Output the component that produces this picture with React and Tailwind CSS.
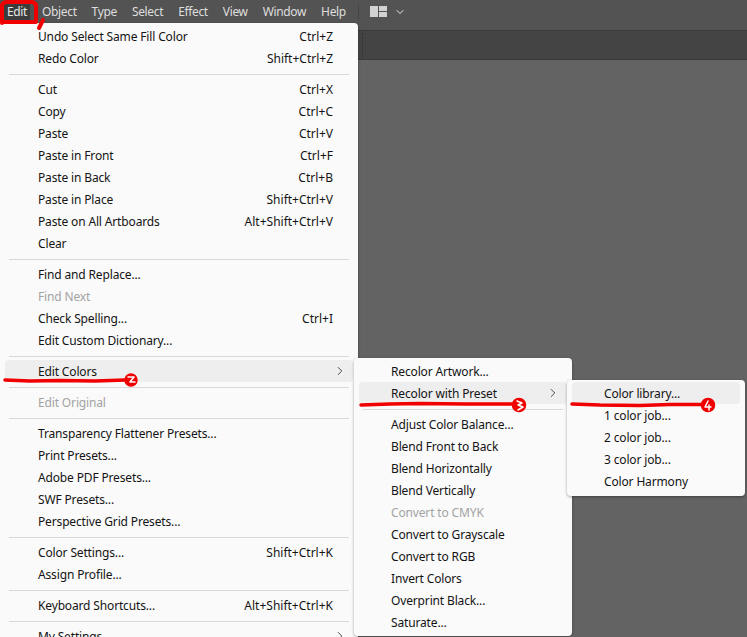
import React from 'react';
import { ChevronRight, ChevronDown } from 'lucide-react';

const mainMenu = [
  [['Undo Select Same Fill Color', 'Ctrl+Z'], ['Redo Color', 'Shift+Ctrl+Z']],
  [['Cut', 'Ctrl+X'], ['Copy', 'Ctrl+C'], ['Paste', 'Ctrl+V'], ['Paste in Front', 'Ctrl+F'], ['Paste in Back', 'Ctrl+B'], ['Paste in Place', 'Shift+Ctrl+V'], ['Paste on All Artboards', 'Alt+Shift+Ctrl+V'], ['Clear']],
  [['Find and Replace...'], ['Find Next', null, 'off'], ['Check Spelling...', 'Ctrl+I'], ['Edit Custom Dictionary...']],
  [['Edit Colors', null, 'active']],
  [['Edit Original', null, 'off']],
  [['Transparency Flattener Presets...'], ['Print Presets...'], ['Adobe PDF Presets...'], ['SWF Presets...'], ['Perspective Grid Presets...']],
  [['Color Settings...', 'Shift+Ctrl+K'], ['Assign Profile...']],
  [['Keyboard Shortcuts...', 'Alt+Shift+Ctrl+K']],
  [['My Settings', null, 'more']],
];

const recolorMenu = [
  [['Recolor Artwork...'], ['Recolor with Preset', null, 'active']],
  [['Adjust Color Balance...'], ['Blend Front to Back'], ['Blend Horizontally'], ['Blend Vertically'], ['Convert to CMYK', null, 'off'], ['Convert to Grayscale'], ['Convert to RGB'], ['Invert Colors'], ['Overprint Black...'], ['Saturate...']],
];

const presetMenu = [
  ['Color library...', null, 'hl'],
  ['1 color job...'],
  ['2 color job...'],
  ['3 color job...'],
  ['Color Harmony'],
];

const topMenu = ['Object', 'Type', 'Select', 'Effect', 'View', 'Window', 'Help'];

function Row({ label, shortcut, state, indent, chevron }) {
  const hl = state === 'active' || state === 'hl';
  return (
    <div className={`relative flex items-center justify-between h-[22px] text-[12px] tracking-[-0.15px] ${state === 'off' ? 'text-[#a3a3a3]' : 'text-[#141414]'}`}>
      {hl && <div className="absolute inset-x-[5px] top-0 bottom-0 rounded bg-[#eeeeee]" />}
      <span className={`relative pt-[2px] ${indent}`}>{label}</span>
      {shortcut && <span className="relative pt-[2px] pr-[25px] tracking-normal">{shortcut}</span>}
      {chevron && (state === 'active' || state === 'more') && (
        <ChevronRight className={`relative w-[14px] h-[14px] text-[#333333] ${chevron}`} strokeWidth={1.5} />
      )}
    </div>
  );
}

function Groups({ groups, indent, chevron }) {
  return groups.map((group, i) => (
    <div key={i}>
      {i > 0 && <div className="mx-[9px] mt-[5px] mb-[3px] h-px bg-[#d8d8d8]" />}
      {group.map(([label, shortcut, state]) => (
        <Row key={label} label={label} shortcut={shortcut} state={state} indent={indent} chevron={chevron} />
      ))}
    </div>
  ));
}

export default function App() {
  return (
    <div className='relative w-[747px] h-[637px] overflow-hidden bg-[#636363] font-["Noto_Sans","Open_Sans",sans-serif]'>
      <div className="flex items-center h-[23px] bg-[#535353] text-[12px] tracking-[-0.35px] text-[#dedede]">
        <div className="flex items-center ml-[4px] pl-[3px] w-[26px] h-[17px] bg-[#3c3c3c] text-[#e8e8e8]">Edit</div>
        <div className="flex ml-[12px] gap-[15px]">
          {topMenu.map((m) => <span key={m}>{m}</span>)}
        </div>
        <div className="ml-[12px] w-px h-[16px] bg-[#444444]" />
        <svg className="ml-[11px]" width="18" height="12" viewBox="0 0 18 12" fill="#d2d2d2">
          <rect x="0" y="0" width="8" height="11" />
          <rect x="9" y="0" width="8" height="5" />
          <rect x="9" y="6" width="8" height="5" />
        </svg>
        <ChevronDown className="ml-[6px] w-3 h-3 text-[#e8e8e8]" strokeWidth={2} />
      </div>
      <div className="h-[7px] bg-[#535353]" />
      <div className="flex items-center h-[30px] bg-[#444444] border-y border-[#3a3a3a]">
        <div className="ml-[362px] h-[24px] border-l border-dotted border-[#2f2f2f]" />
      </div>

      <div className="absolute left-0 top-[23px] w-[358px] h-[620px] pt-[2px] rounded-r bg-[#fafafa] shadow-[0_1px_3px_rgba(0,0,0,0.35)]">
        <Groups groups={mainMenu} indent="pl-[38px]" chevron="mr-[11px]" />
      </div>

      <div className="absolute left-[354px] top-[358px] w-[218px] h-[278px] pt-[2px] rounded bg-[#fafafa] shadow-[0_1px_3px_rgba(0,0,0,0.35)]">
        <Groups groups={recolorMenu} indent="pl-[37px]" chevron="mr-[12px]" />
      </div>

      <div className="absolute left-[567px] top-[380px] w-[178px] h-[116px] pt-[2px] rounded bg-[#fafafa] shadow-[0_1px_3px_rgba(0,0,0,0.35)]">
        <Groups groups={[presetMenu]} indent="pl-[37px]" />
      </div>

      {/* red marker annotations */}
      <svg className="absolute left-0 top-0 pointer-events-none" width="747" height="637" fill="none" stroke="#f00000" strokeLinecap="round" strokeLinejoin="round">
        <path d="M2 23V5Q3 2 8 2H32Q37 3 36 9V21M3 22H36" strokeWidth="4" />
        <path d="M43 20L39 28" strokeWidth="4" />

        <path d="M5 380L30 381L60 380.5L95 381L125 380" strokeWidth="3.5" />
        <circle cx="131" cy="380" r="6" fill="#f00000" strokeWidth="1.5" />
        <path d="M128 377H134L130 382H135" stroke="#ffffff" strokeWidth="1.5" />

        <path d="M361 405L390 404L420 403.5L465 404L512 404" strokeWidth="3.5" />
        <circle cx="519" cy="405" r="6.5" fill="#f00000" strokeWidth="1.5" />
        <path d="M517 401L522 403L518 405L523 407L518 410" stroke="#ffffff" strokeWidth="1.5" />

        <path d="M572 404L600 405L640 405.5L670 404.5L702 404.5" strokeWidth="3.5" />
        <circle cx="708" cy="405" r="6.5" fill="#f00000" strokeWidth="1.5" />
        <path d="M708 401L705 407H711M709 405V410" stroke="#ffffff" strokeWidth="1.5" />
      </svg>
    </div>
  );
}
